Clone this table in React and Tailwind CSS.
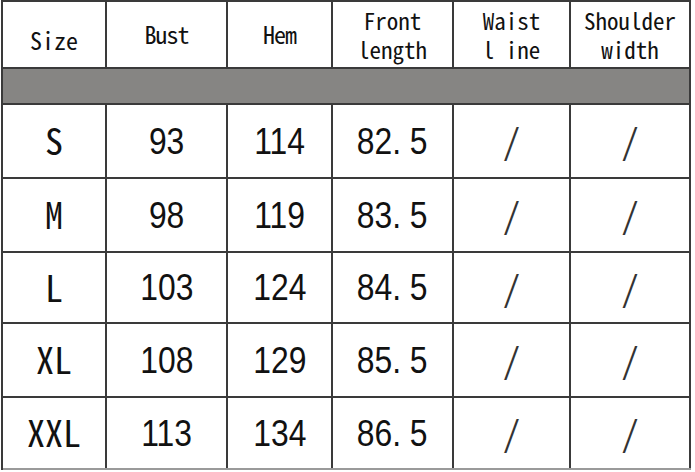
import React from "react";

const mono = { fontFamily: '"Noto Sans Mono CJK SC", "Noto Sans CJK SC", "DejaVu Sans Mono", monospace' };
const sans = { fontFamily: '"Liberation Sans", Arial, sans-serif' };

const widths = ["w-[104px]", "w-[121px]", "w-[105px]", "w-[121px]", "w-[117px]", "w-[120px]"];

const rows = [
  { h: "h-[74px]", cells: ["S", "93", "114", "82. 5", "/", "/"] },
  { h: "h-[74px]", cells: ["M", "98", "119", "83. 5", "/", "/"] },
  { h: "h-[71px]", cells: ["L", "103", "124", "84. 5", "/", "/"] },
  { h: "h-[74px]", cells: ["XL", "108", "129", "85. 5", "/", "/"] },
  { h: "h-[72px]", cells: ["XXL", "113", "134", "86. 5", "/", "/"] },
];

function Cell({ c, j }) {
  if (j === 0) {
    return (
      <span className="inline-block -mt-[4px] text-[36px] leading-none" style={mono}>
        {c}
      </span>
    );
  }
  if (c === "/") {
    return (
      <span className="inline-block -mt-[3px] text-[35px] leading-none text-[#333]" style={mono}>
        /
      </span>
    );
  }
  return (
    <span className="inline-block whitespace-pre scale-x-[0.86] text-[37px] leading-none" style={sans}>
      {c}
    </span>
  );
}

export default function App() {
  return (
    <div className="w-[695px] h-[472px] bg-white overflow-hidden text-[#111]" style={mono}>
      <div className="ml-[1px] w-[690px] flex flex-col border-t-2 border-l-2 border-[#3a3a3a]">
        {/* header */}
        <div className="flex h-[67px] border-b-2 border-[#3a3a3a]">
          <div className={`${widths[0]} shrink-0 border-r-2 border-[#3a3a3a] flex items-center justify-center pt-[10px] text-[24px] leading-none`}>Size</div>
          <div className={`${widths[1]} shrink-0 border-r-2 border-[#3a3a3a] flex items-center justify-center pb-[2px] text-[24px] leading-none tracking-[-1px]`}>Bust</div>
          <div className={`${widths[2]} shrink-0 border-r-2 border-[#3a3a3a] flex items-center justify-center pb-[2px] text-[24px] leading-none tracking-[-1px]`}>Hem</div>
          <div className={`${widths[3]} shrink-0 border-r-2 border-[#3a3a3a] flex flex-col items-center justify-center text-[23px] leading-[29px]`}>
            <div className="h-[29px]">Front</div>
            <div className="h-[29px]">length</div>
          </div>
          <div className={`${widths[4]} shrink-0 border-r-2 border-[#3a3a3a] flex flex-col items-center justify-center text-[23px] leading-[29px]`}>
            <div className="h-[29px]">Waist</div>
            <div className="h-[29px]">l ine</div>
          </div>
          <div className={`${widths[5]} shrink-0 border-r-2 border-[#3a3a3a] flex flex-col items-center justify-center text-[23px] leading-[29px]`}>
            <div className="h-[29px]">Shoulder</div>
            <div className="h-[29px]">width</div>
          </div>
        </div>
        {/* gray band */}
        <div className="h-[36px] bg-[#868583] border-b-2 border-r-2 border-[#3a3a3a]" />
        {/* body rows */}
        {rows.map((r, i) => (
          <div key={i} className={`flex ${r.h} border-b-2 ${i === rows.length - 1 ? "border-[#9a9a9a]" : "border-[#3a3a3a]"}`}>
            {r.cells.map((c, j) => (
              <div
                key={j}
                className={`${widths[j]} shrink-0 border-r-2 border-[#3a3a3a] flex items-center justify-center`}
              >
                <Cell c={c} j={j} />
              </div>
            ))}
          </div>
        ))}
      </div>
    </div>
  );
}
